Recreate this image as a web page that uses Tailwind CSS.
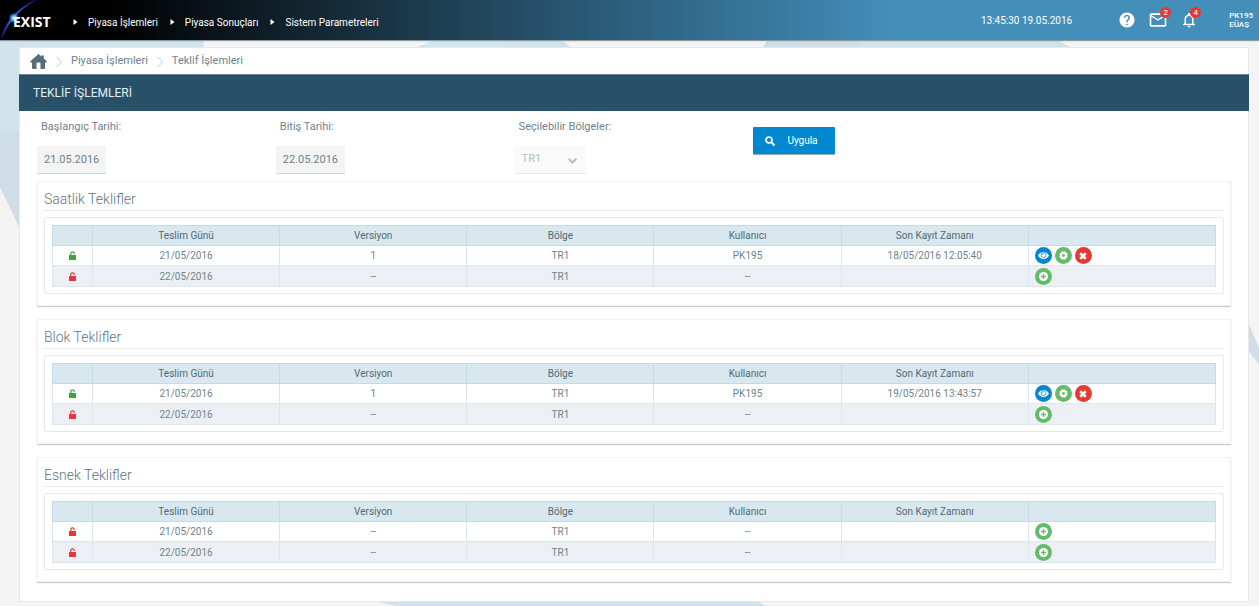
<!DOCTYPE html>
<html lang="tr">
<head>
<meta charset="utf-8">
<title>EXIST - Teklif İşlemleri</title>
<script src="https://cdn.jsdelivr.net/npm/@tailwindcss/browser@4"></script>
</head>
<body class="relative min-h-screen bg-[#f4f4f4] font-[Roboto,sans-serif] text-[#6f828c]">
<svg class="hidden">
  <symbol id="unlock" viewBox="0 0 7 9"><path fill="currentColor" d="M0 4h1.200V2.600a2.300 2.300 0 0 1 4.600 0V3H4.600V2.600a1.100 1.100 0 0 0-2.200 0V4H7v5H0z"/></symbol>
  <symbol id="eye" viewBox="0 0 16 16"><path fill="currentColor" d="M8 2.800C4.500 2.800 1.700 5 0 8c1.700 3 4.500 5.200 8 5.200s6.300-2.200 8-5.200c-1.700-3-4.500-5.200-8-5.200z"/><circle cx="8" cy="7.500" r="3.600" fill="none" stroke="#0288d1" stroke-width="1.100"/><path d="M6.200 7.300A1.900 1.900 0 0 1 8 5.500" fill="none" stroke="#0288d1"/></symbol>
  <symbol id="gear" viewBox="0 0 16 16"><path fill="none" stroke="currentColor" stroke-width="3" stroke-dasharray="3.200 1.510" d="M8 2a6 6 0 1 1 0 12A6 6 0 1 1 8 2"/><circle cx="8" cy="8" r="4.300" fill="none" stroke="currentColor" stroke-width="3.600"/></symbol>
  <symbol id="cross" viewBox="0 0 16 16"><path stroke="currentColor" stroke-width="5" d="M2.500 2.500l11 11M13.500 2.500l-11 11"/></symbol>
  <symbol id="plus" viewBox="0 0 16 16"><circle cx="8" cy="8" r="8" fill="currentColor"/><path stroke="#66bb6a" stroke-width="2.400" d="M8 3.500v9M3.500 8h9"/></symbol>
  <symbol id="chev" viewBox="0 0 8 14"><path fill="none" stroke="#cfd8dc" stroke-width="1.200" d="M1 1l6 6-6 6"/></symbol>
</svg>

<!-- page backdrop -->
<div class="absolute inset-0 overflow-hidden" aria-hidden="true">
  <svg class="h-[606px] w-full" viewBox="0 0 1259 606" preserveAspectRatio="none">
    <path fill="#d0e2eb" d="M0 0H203V40L206 60L19 134L0 134Z"/>
    <path fill="#cfdde6" d="M0 134L19 132V227L0 187Z"/>
    <path fill="#d0e7f0" d="M405 53L433 40H507L500 53Z"/>
    <path fill="#d0e2eb" d="M507 40H562L577 53H500Z"/>
    <path fill="#cfdde6" d="M767 40H860V53H760Z"/>
    <path fill="#d0e2eb" d="M860 40H1058L1080 53H860Z"/>
    <path fill="#cfdde6" d="M1249 324L1259 348V364L1249 352Z"/>
    <path fill="#d0e2eb" d="M370 600H630V606H396Z"/>
    <path fill="#d0e3ed" d="M630 600H755L766 606H630Z"/>
  </svg>
</div>

<header class="relative flex h-10 items-center bg-[linear-gradient(90deg,#000_0px,#000_110px,#1b3748_400px,#2c5f7d_620px,#3b7da4_800px,#448eba_890px)] text-[10px] text-white shadow-[0_1px_1px_#8a9aa3]">
  <a href="#" class="flex w-[73px] shrink-0 items-center" aria-label="EXIST">
    <svg class="h-10 w-[60px]" viewBox="0 0 60 40">
      <defs>
        <linearGradient id="arc" x1="0" y1="1" x2="1" y2="0"><stop offset="0" stop-color="#0a1a90"/><stop offset=".45" stop-color="#2f6fff"/><stop offset="1" stop-color="#06136e"/></linearGradient>
        <radialGradient id="glow"><stop offset="0" stop-color="#e8fbff"/><stop offset=".4" stop-color="#5cb6ea"/><stop offset="1" stop-color="#1040a0" stop-opacity="0"/></radialGradient>
      </defs>
      <path d="M2 37Q9 13 36 0Q12 12 2 37Z" fill="url(#arc)" stroke="url(#arc)" stroke-width="1.300"/>
      <circle cx="14" cy="18" r="6" fill="url(#glow)"/>
      <text x="13" y="27" fill="#fff" font-family="Open Sans" font-weight="700" font-size="14">EXIST</text>
    </svg>
  </a>
  <nav class="flex grow items-center gap-3 pt-1" aria-label="Ana menü">
    <a href="#" class="flex items-center gap-[10px]"><svg class="h-[6px] w-[5px]" viewBox="0 0 4 6"><path fill="#fff" d="M0 0l4 3-4 3z"/></svg>Piyasa İşlemleri</a>
    <a href="#" class="flex items-center gap-[10px]"><svg class="h-[6px] w-[5px]" viewBox="0 0 4 6"><path fill="#fff" d="M0 0l4 3-4 3z"/></svg>Piyasa Sonuçları</a>
    <a href="#" class="flex items-center gap-[10px]"><svg class="h-[6px] w-[5px]" viewBox="0 0 4 6"><path fill="#fff" d="M0 0l4 3-4 3z"/></svg>Sistem Parametreleri</a>
  </nav>
  <time class="mr-[46px]">13:45:30 19.05.2016</time>
  <div class="flex items-center gap-3">
    <button class="block" aria-label="Yardım"><svg class="size-[18px]" viewBox="0 0 24 24"><path fill="#fff" d="M12 2C6.480 2 2 6.480 2 12s4.480 10 10 10 10-4.480 10-10S17.520 2 12 2zm1 17h-2v-2h2v2zm2.070-7.750l-.9.920C13.450 12.900 13 13.500 13 15h-2v-.5c0-1.100.45-2.100 1.170-2.830l1.240-1.260c.37-.36.59-.86.59-1.410 0-1.100-.9-2-2-2s-2 .9-2 2H8c0-2.210 1.790-4 4-4s4 1.790 4 4c0 .88-.36 1.680-.93 2.250z"/></svg></button>
    <button class="relative block" aria-label="Mesajlar"><svg class="size-[20px]" viewBox="0 0 24 24"><path fill="#fff" d="M20 4H4c-1.100 0-2 .9-2 2v12c0 1.100.9 2 2 2h16c1.100 0 2-.9 2-2V6c0-1.100-.9-2-2-2zm0 14H4V8l8 5 8-5v10zm-8-7L4 6h16l-8 5z"/></svg><span class="absolute -top-[3px] -right-[3px] size-[11px] rounded-full bg-[#e53935] text-center text-[8px] leading-[11px]">2</span></button>
    <button class="relative block" aria-label="Bildirimler"><svg class="size-[18px]" viewBox="0 0 24 24"><path fill="#fff" d="M12 22c1.100 0 2-.9 2-2h-4c0 1.100.9 2 2 2zm6-6v-5c0-3.070-1.630-5.640-4.500-6.320V4c0-.83-.67-1.500-1.500-1.500s-1.500.67-1.500 1.500v.68C7.640 5.360 6 7.920 6 11v5l-2 2v1h16v-1l-2-2zm-2 1H8v-6c0-2.480 1.510-4.500 4-4.500s4 2.020 4 4.500v6z"/></svg><span class="absolute -top-1 -right-[3px] size-[11px] rounded-full bg-[#e53935] text-center text-[8px] leading-[11px]">4</span></button>
  </div>
  <div class="mr-[6px] ml-[31px] text-[8px] leading-[9px] font-medium">PK195<br>EÜAŞ</div>
</header>

<main class="relative mx-[10px] mt-[7px] mb-1 ml-[19px] border border-[#e6e8ea] bg-white pb-[19px]">
  <nav class="flex h-[26px] items-center gap-2 pt-px pl-[10px] text-[11px]" aria-label="Konum">
    <a href="#" aria-label="Ana sayfa"><svg class="h-[15px] w-[17px]" viewBox="0 0 17 15"><path fill="#546e7a" d="M8.500 0l3 2.500V1.500h2.300v3L17 7.500 16 8.500h-1V13.500q0 1.500-1.500 1.500H10.500V9.500q0-1-1-1h-2q-1 0-1 1V15H3.500Q2 15 2 13.500V8.500H1L0 7.500z"/></svg></a>
    <svg class="h-3 w-2"><use href="#chev"/></svg>
    <a href="#">Piyasa İşlemleri</a>
    <svg class="h-3 w-2"><use href="#chev"/></svg>
    <a href="#">Teklif İşlemleri</a>
  </nav>
  <h1 class="-mx-px flex h-[37px] items-center border-t border-[#6d8797] bg-[#285169] pl-[14px] text-[12px] text-[#e6edf1]">TEKLİF İŞLEMLERİ</h1>

  <form class="grid grid-cols-5 items-start px-[17px] pt-2 text-[11px]">
    <div class="flex flex-col items-start gap-[11px]">
      <label for="d1" class="pl-1 leading-4">Başlangıç Tarihi:</label>
      <input id="d1" value="21.05.2016" class="h-7 w-[69px] border-b border-[#cfd8dc] bg-[#f4f4f4] px-[7px]">
    </div>
    <div class="flex flex-col items-start gap-[11px]">
      <label for="d2" class="pl-1 leading-4">Bitiş Tarihi:</label>
      <input id="d2" value="22.05.2016" class="h-7 w-[69px] border-b border-[#cfd8dc] bg-[#f4f4f4] px-[7px]">
    </div>
    <div class="flex flex-col items-start gap-[11px]">
      <label for="reg" class="pl-1 leading-4">Seçilebilir Bölgeler:</label>
      <div class="relative">
        <select id="reg" disabled class="block h-7 w-[71px] appearance-none border-b border-[#e3e8eb] bg-[#fafafa] px-[7px] text-[#b4c0c6] opacity-100"><option>TR1</option></select>
        <svg class="absolute top-3 right-[9px] h-[6px] w-[9px]" viewBox="0 0 9 6"><path fill="none" stroke="#b4c0c6" stroke-width="2" d="M.7.700l3.800 3.800L8.300.700"/></svg>
      </div>
    </div>
    <button type="button" class="mt-2 flex h-[27px] w-[82px] items-center gap-3 rounded-[1px] bg-[#0288d1] pl-3 text-[10px] text-white shadow-[0_1px_1px_#90a4ae]"><svg class="size-[10px]" viewBox="0 0 10 10"><circle cx="4" cy="4" r="3" fill="none" stroke="#fff" stroke-width="1.700"/><path stroke="#fff" stroke-width="2" d="M6.300 6.300L9.500 9.500"/></svg>Uygula</button>
  </form>

  <div id="offers" class="mx-[17px] mt-[7px] flex flex-col gap-[13px]"></div>
</main>

<template id="card">
  <section class="border border-[#f0f2f3] px-[6px] pt-[9px] pb-[11px] shadow-[0_1px_1px_#c5ced8]">
    <h2 class="h-5 border-b border-[#e8eaeb] text-[14px] leading-4 font-light text-[#5f7580]"></h2>
    <div class="mt-[6px] rounded-[2px] border border-[#e6e8e9] px-[7px] pt-[7px] pb-[6px]">
      <table class="w-full table-fixed border-collapse text-center text-[10px]">
        <colgroup><col class="w-10"><col><col><col><col><col><col></colgroup>
        <thead><tr class="h-5 bg-[#d9e8ef] text-[#4f6975]">
          <th class="border border-[#c5dae3]"></th>
          <th class="border border-[#c5dae3] font-normal">Teslim Günü</th>
          <th class="border border-[#c5dae3] font-normal">Versiyon</th>
          <th class="border border-[#c5dae3] font-normal">Bölge</th>
          <th class="border border-[#c5dae3] font-normal">Kullanıcı</th>
          <th class="border border-[#c5dae3] font-normal">Son Kayıt Zamanı</th>
          <th class="border border-[#c5dae3]"></th>
        </tr></thead>
        <tbody></tbody>
      </table>
    </div>
  </section>
</template>

<script>
const view = '<button aria-label="Görüntüle" class="flex size-[17px] items-center justify-center rounded-full bg-[#0288d1] text-white"><svg class="size-[11px]"><use href="#eye"/></svg></button>';
const edit = '<button aria-label="Düzenle" class="flex size-[17px] items-center justify-center rounded-full bg-[#66bb6a] text-white"><svg class="size-[9px]"><use href="#gear"/></svg></button>';
const del = '<button aria-label="Sil" class="flex size-[17px] items-center justify-center rounded-full bg-[#e53935] text-white"><svg class="size-[8px]"><use href="#cross"/></svg></button>';
const add = '<button aria-label="Ekle" class="flex size-[17px] items-center justify-center rounded-full bg-[#66bb6a] text-white"><svg class="size-[9px]"><use href="#plus"/></svg></button>';
const green = 'text-[#43a047]', red = 'text-[#e53935]';
const full = view + edit + del;
const offers = [
  ['Saatlik Teklifler', [[green, '21/05/2016', '1', 'TR1', 'PK195', '18/05/2016 12:05:40', full], [red, '22/05/2016', '--', 'TR1', '--', '', add]]],
  ['Blok Teklifler', [[green, '21/05/2016', '1', 'TR1', 'PK195', '19/05/2016 13:43:57', full], [red, '22/05/2016', '--', 'TR1', '--', '', add]]],
  ['Esnek Teklifler', [[red, '21/05/2016', '--', 'TR1', '--', '', add], [red, '22/05/2016', '--', 'TR1', '--', '', add]]]
];
for (const [title, rows] of offers) {
  const card = document.getElementById('card').content.cloneNode(true);
  card.querySelector('h2').textContent = title;
  card.querySelector('tbody').innerHTML = rows.map(([color, ...cells]) => {
    const actions = cells.pop();
    return '<tr class="h-5 even:h-[21px] even:bg-[#ecf0f5]"><td class="border border-[#dde6ec]"><svg class="mx-auto h-[9px] w-[7px] ' + color + '"><use href="#unlock"/></svg></td>' +
      cells.map(c => '<td class="border border-[#dde6ec]">' + c + '</td>').join('') +
      '<td class="border border-[#dde6ec]"><div class="flex gap-[3px] pl-[6px]">' + actions + '</div></td></tr>';
  }).join('');
  document.getElementById('offers').append(card);
}
</script>
</body>
</html>
